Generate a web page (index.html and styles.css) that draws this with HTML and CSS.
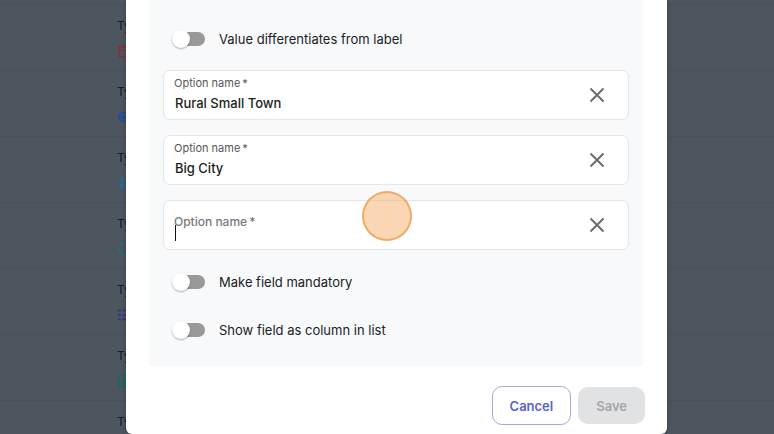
FILE: index.html
```html
<!DOCTYPE html>
<html lang="en">
<head>
    <meta charset="UTF-8">
    <meta name="viewport" content="width=device-width, initial-scale=1.0">
    <title>Edit field</title>
    <link rel="stylesheet" href="styles.css">
</head>
<body>
    <ul class="field-list">
        <li class="field-row">
            <span>Type</span>
            <svg class="icon red" viewBox="0 0 14 14"><rect x="2" y="2.5" width="12" height="10.5" rx="2"/><path d="M2 6h12M5.5 0.5v3.5M10.5 0.5v3.5"/></svg>
        </li>
        <li class="field-row">
            <span>Type</span>
            <svg class="icon blue" viewBox="0 0 14 14"><rect x="2" y="2.5" width="13" height="9" rx="4.5"/><circle cx="6.5" cy="7" r="1.6"/></svg>
        </li>
        <li class="field-row">
            <span>Type</span>
            <svg class="icon cyan" viewBox="0 0 14 14"><path d="M2 4.5h12M1 9.5h12M6 0.5l-2 13M11 0.5l-2 13"/></svg>
        </li>
        <li class="field-row">
            <span>Type</span>
            <svg class="icon teal" viewBox="0 0 14 14"><circle cx="8" cy="7" r="6"/></svg>
        </li>
        <li class="field-row">
            <span>Type</span>
            <svg class="icon indigo" viewBox="0 0 14 14"><path d="M1 2.5h3M1 7h3M1 11.5h3M5.5 2.5h9M5.5 7h9M5.5 11.5h9"/></svg>
        </li>
        <li class="field-row">
            <span>Type</span>
            <svg class="icon green" viewBox="0 0 14 14"><rect x="2" y="1" width="12" height="12" rx="2"/><path d="M8 4v6M5 7l3 3 3-3"/></svg>
        </li>
        <li class="field-row">
            <span>Type</span>
        </li>
    </ul>

    <div class="overlay">
        <form class="modal" role="dialog">
            <div class="panel">
                <label class="toggle">
                    <input type="checkbox">
                    <span>Value differentiates from label</span>
                </label>

                <div class="options">
                    <div class="option">
                        <div class="option-text">
                            <label for="option1">Option name&thinsp;*</label>
                            <input type="text" id="option1" value="Rural Small Town">
                        </div>
                        <button type="button" class="remove" aria-label="Remove">
                            <svg viewBox="0 0 16 16"><path d="M1.5 1.5l13 13M14.5 1.5l-13 13"/></svg>
                        </button>
                    </div>
                    <div class="option">
                        <div class="option-text">
                            <label for="option2">Option name&thinsp;*</label>
                            <input type="text" id="option2" value="Big City">
                        </div>
                        <button type="button" class="remove" aria-label="Remove">
                            <svg viewBox="0 0 16 16"><path d="M1.5 1.5l13 13M14.5 1.5l-13 13"/></svg>
                        </button>
                    </div>
                    <div class="option empty">
                        <div class="option-text">
                            <label for="option3">Option name&thinsp;*</label>
                            <input type="text" id="option3">
                            <span class="caret"></span>
                        </div>
                        <button type="button" class="remove" aria-label="Remove">
                            <svg viewBox="0 0 16 16"><path d="M1.5 1.5l13 13M14.5 1.5l-13 13"/></svg>
                        </button>
                        <span class="click-marker"></span>
                    </div>
                </div>

                <div class="toggles">
                    <label class="toggle">
                        <input type="checkbox">
                        <span>Make field mandatory</span>
                    </label>
                    <label class="toggle">
                        <input type="checkbox">
                        <span>Show field as column in list</span>
                    </label>
                </div>
            </div>

            <div class="actions">
                <button type="button" class="cancel">Cancel</button>
                <button type="submit" class="save" disabled>Save</button>
            </div>
        </form>
    </div>
</body>
</html>
```
FILE: styles.css
```css
* {
    box-sizing: border-box;
}
body {
    margin: 0;
    height: 100vh;
    overflow: hidden;
    font-family: Inter, "Liberation Sans", sans-serif;
    font-size: 13px;
    color: #202124;
    background-color: #4d555f;
}
button,
input {
    font-family: inherit;
    margin: 0;
}

/* list behind the dialog */
.field-list {
    list-style: none;
    height: 100%;
    margin: 0;
    padding: 4px 0 0;
    overflow: hidden;
}
.field-row {
    height: 66px;
    padding: 13px 0 0 117px;
    border-top: 1px solid #48505a;
    display: flex;
    flex-direction: column;
    gap: 10px;
    font-size: 12px;
    line-height: 16px;
    color: #141a26;
}
.field-row:last-child {
    height: 30px;
}
.icon {
    width: 14px;
    height: 14px;
    fill: none;
    stroke: currentColor;
    stroke-width: 1.7;
}
.red { color: #85303f; }
.blue { color: #2348a8; }
.cyan { color: #236f94; }
.teal { color: #227274; }
.indigo { color: #2d2e94; }
.green { color: #1a6a5a; }

/* dialog */
.overlay {
    position: absolute;
    inset: 0;
    display: flex;
    align-items: stretch;
    padding: 0 107px 0 126px;
}
.modal {
    flex: 1;
    background-color: #fff;
    border-radius: 0 0 6px 6px;
    box-shadow: 0 0 4px rgba(0, 0, 0, 0.3);
}
.panel {
    margin: 0 24px 0 23px;
    padding: 29px 14px 26px;
    background-color: #f8f9fb;
}
.toggle {
    display: flex;
    align-items: center;
    gap: 14px;
    height: 20px;
    padding-left: 9px;
    cursor: pointer;
}
.toggle input {
    appearance: none;
    display: flex;
    align-items: center;
    width: 33px;
    height: 14px;
    border-radius: 7px;
    background: linear-gradient(#999, #999) right / 24px 14px no-repeat;
    cursor: pointer;
}
.toggle input::before {
    content: "";
    flex: none;
    width: 18px;
    height: 18px;
    border-radius: 50%;
    background-color: #fff;
    box-shadow: 0 1px 2px rgba(0, 0, 0, 0.3);
}
.toggle input:checked {
    justify-content: flex-end;
}
.options {
    display: grid;
    gap: 15px;
    margin: 21px 0 22px;
}
.option {
    position: relative;
    display: flex;
    align-items: center;
    height: 50px;
    padding: 0 20px 0 10px;
    background-color: #fff;
    border: 1px solid #e3e6e8;
    border-radius: 7px;
}
.option-text {
    flex: 1;
    display: grid;
}
.option-text label {
    font-size: 11px;
    line-height: 16px;
    color: #56585c;
}
.option-text input {
    width: 100%;
    height: 24px;
    padding: 0 1px;
    border: none;
    outline: none;
    background: none;
    font-size: 13px;
    font-weight: 500;
    color: #1c1d20;
}
.empty .option-text label,
.empty .option-text input {
    grid-area: 1 / 1;
}
.empty .option-text label {
    padding-bottom: 6px;
    font-size: 12px;
    line-height: 18px;
    font-weight: 500;
    color: #77797c;
}
.caret {
    position: absolute;
    left: 11px;
    top: 24px;
    width: 1px;
    height: 16px;
    background-color: #111;
}
.remove {
    display: flex;
    padding: 3px;
    border: none;
    background: none;
    cursor: pointer;
}
.remove svg {
    width: 16px;
    height: 16px;
    fill: none;
    stroke: #6c6c6c;
    stroke-width: 2;
}
.click-marker {
    position: absolute;
    left: calc(50% - 34px);
    top: -10px;
    width: 50px;
    height: 50px;
    border: 2px solid rgba(235, 160, 88, 0.8);
    border-radius: 50%;
    background-color: rgba(246, 186, 126, 0.6);
    pointer-events: none;
}
.toggles {
    display: grid;
    gap: 28px;
}
.actions {
    display: flex;
    justify-content: flex-end;
    align-items: center;
    gap: 7px;
    padding: 20px 22px 8px;
}
.actions button {
    height: 37px;
    padding: 0 18px;
    border: none;
    border-radius: 10px;
    font-size: 13px;
    font-weight: 600;
}
.actions .cancel {
    height: 39px;
    padding: 0 17px;
    border: 1px solid #a5a8da;
    background-color: #fff;
    color: #5c62c8;
    cursor: pointer;
}
.actions .save {
    background-color: #e1e2e4;
    color: #a4a5a8;
}
```
